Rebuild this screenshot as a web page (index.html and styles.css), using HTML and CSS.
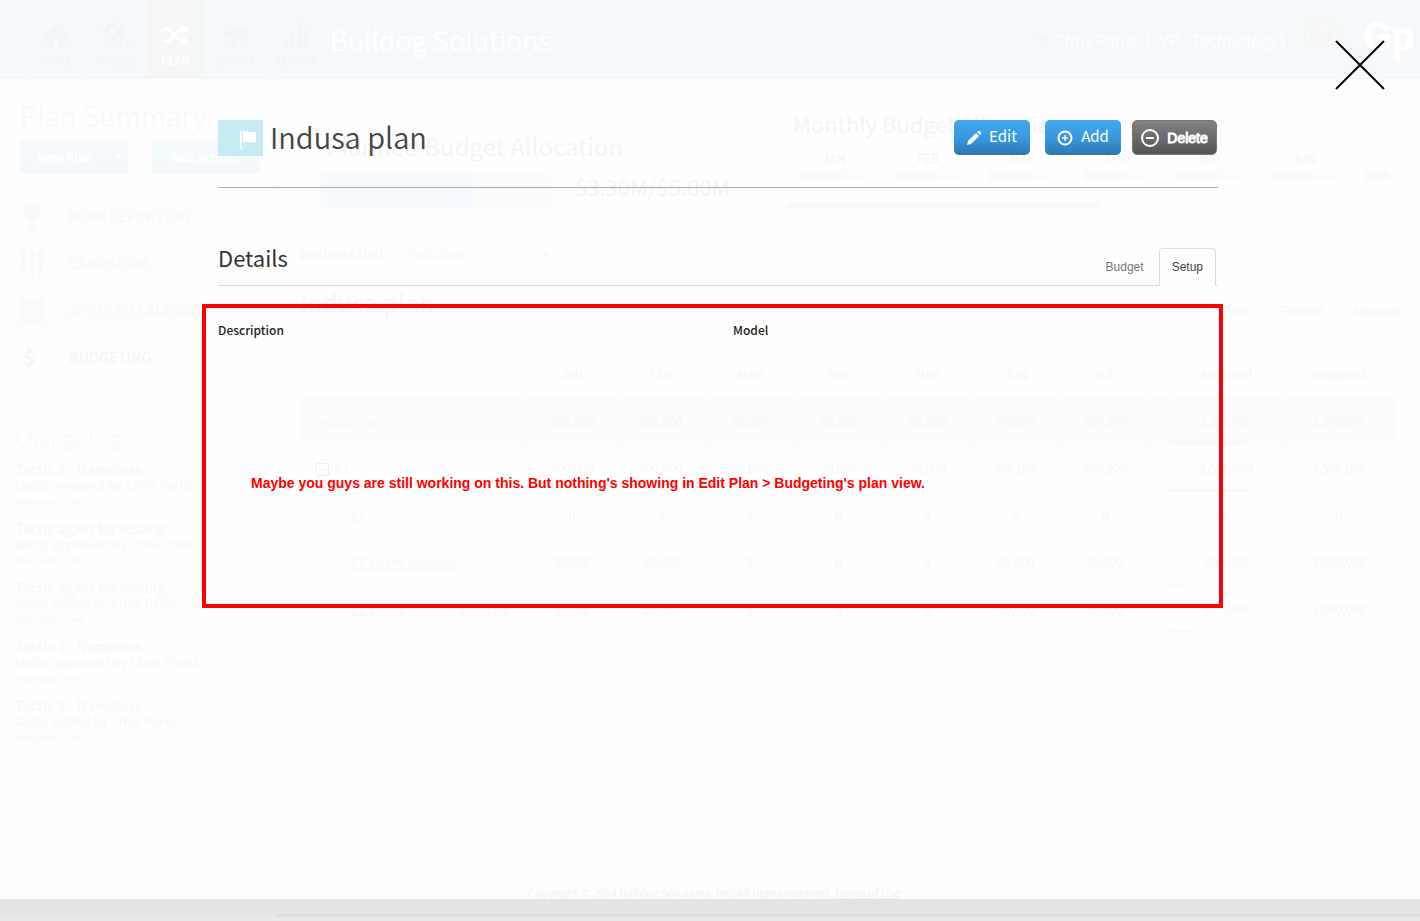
FILE: index.html
```html
<!DOCTYPE html>
<html lang="en">
<head>
<meta charset="utf-8">
<title>Indusa plan - Budgeting</title>
<link rel="stylesheet" href="styles.css">
</head>
<body>
<div class="page">
  <header class="topbar">
    <nav class="mainnav">
      <a href="#"><svg viewBox="0 0 28 28" width="28" height="28"><path d="M14 2 1 15h4v11h7v-8h4v8h7V15h4l-5-5V4h-3v3z"/></svg><span>HOME</span></a>
      <a href="#"><svg viewBox="0 0 28 28" width="28" height="28"><circle cx="11" cy="11" r="6" fill="none" stroke="currentColor" stroke-width="4"/><circle cx="11" cy="11" r="9" fill="none" stroke="currentColor" stroke-width="3" stroke-dasharray="4 3"/><circle cx="22" cy="22" r="4" fill="none" stroke="currentColor" stroke-width="3"/></svg><span>MODEL</span></a>
      <a href="#" class="active"><svg viewBox="0 0 28 28" width="28" height="28"><path d="M1 8h4c8 0 8 12 16 12M1 20h4c8 0 8-12 16-12" fill="none" stroke="currentColor" stroke-width="3"/><path d="M20 3l7 5-7 5zM20 15l7 5-7 5z"/></svg><span>PLAN</span></a>
      <a href="#"><svg viewBox="0 0 28 28" width="28" height="28"><path d="M2 10h8c6 0 11-3 15-7v20c-4-4-8-6-13-6l3 7h-5l-3-7H2z"/></svg><span>BOOST</span></a>
      <a href="#"><svg viewBox="0 0 28 28" width="28" height="28"><path d="M0 25h28v2H0zM2 20h4v5H2zM8 14h4v11H8zM15 1h5v24h-5zM22 9h4v16h-4z"/></svg><span>REPORT</span></a>
    </nav>
    <h1 class="brand">Bulldog Solutions</h1>
    <div class="user">
      <svg class="caret" viewBox="0 0 10 6" width="10" height="6"><path d="M0 0h3l2 2 2-2h3L5 6z"/></svg>
      <span>Chris Parisi</span><span>|</span><span>VP - Technology1</span>
    </div>
    <svg class="avatar" viewBox="0 0 36 28" width="36" height="28"><rect width="36" height="28" fill="#f5f6f6"/><path d="M4 24C2 10 10 1 17 4c8 4 3 13-2 12-5 0-5-7 0-8M20 4c10-2 15 5 12 10 0 6-8 12-15 10" fill="none" stroke="#f9f9f8" stroke-width="3"/></svg>
    <div class="logo">Gp</div>
  </header>

  <div class="columns">
    <aside class="sidebar">
      <h2>Plan Summary</h2>
      <div class="side-actions">
        <button type="button" class="split">New Plan <svg viewBox="0 0 8 4" width="8" height="4"><path d="M0 0h8L4 4z"/></svg></button>
        <button type="button">Add Activity</button>
      </div>
      <nav class="sidenav">
        <a href="#"><svg viewBox="0 0 24 26" width="24" height="26"><path d="M12 0a9 9 0 0 1 9 9c0 5-4 6-5 11H8C7 15 3 14 3 9a9 9 0 0 1 9-9zM8 21h8v3l-2 2h-4l-2-2z"/></svg>PLAN DEFINITION</a>
        <a href="#"><svg viewBox="0 0 24 26" width="24" height="26"><path d="M2 0h3v13h2v6H5v7H2v-7H0v-6h2zM11 0h3v8h2v6h-2v12h-3V14H9V8h2zM19 0h3v3h2v6h-2v17h-3V9h-2V3h2z"/></svg>CAMPAIGNS</a>
        <a href="#"><svg viewBox="0 0 24 26" width="24" height="26"><path d="M0 2h3V0h3v2h12V0h3v2h3v24H0z"/><path d="M2 9h20M2 14h20M2 19h20M7 11v12M12 11v12M17 11v12" stroke="#fdfdfd" fill="none"/></svg>APPLY TO CALENDAR</a>
        <a href="#" class="active"><span class="dollar">$</span>BUDGETING</a>
      </nav>
      <section class="log">
        <h3>Change Log</h3>
        <article><strong>Tactic 1 - Nameless</strong><p>tactic removed by Chris Parisi.</p><small>Today at 01:33 AM</small></article>
        <article><strong>Tactic again for testing</strong><p>tactic approved by Chris Parisi.</p><small>Today at 01:31 AM</small></article>
        <article><strong>Tactic again for testing</strong><p>tactic added by Chris Parisi.</p><small>Today at 01:31 AM</small></article>
        <article><strong>Tactic 1 - Nameless</strong><p>tactic approved by Chris Parisi.</p><small>Today at 01:29 AM</small></article>
        <article><strong>Tactic 1 - Nameless</strong><p>tactic added by Chris Parisi.</p><small>Today at 01:28 AM</small></article>
      </section>
    </aside>

    <main class="main">
      <div class="cards">
        <section class="card planned">
          <h2>Planned Budget Allocation</h2>
          <div class="planned-row"><div class="bar"><i></i></div><span>$3.30M/$5.00M</span></div>
        </section>
        <section class="card monthly">
          <h2>Monthly Budget Allocation</h2>
          <div class="months">
            <div class="month">JAN<div class="bar"><i></i></div></div>
            <div class="month">FEB<div class="bar"><i></i></div></div>
            <div class="month">MAR<div class="bar"><i></i></div></div>
            <div class="month">APR<div class="bar"><i></i></div></div>
            <div class="month">MAY<div class="bar"><i></i></div></div>
            <div class="month">JUN<div class="bar"><i></i></div></div>
            <div class="month">JUL<div class="bar"><i></i></div></div>
          </div>
          <div class="scrollbar"></div>
        </section>
      </div>
      <div class="unit">
        <label for="unit">Business Unit:</label>
        <div class="select"><select id="unit"><option>Individual</option></select><svg viewBox="0 0 8 4" width="8" height="4"><path d="M0 0h8L4 4z"/></svg></div>
      </div>
      <div class="plan-head">
        <h2>Indusa plan</h2>
        <nav><a href="#">Actuals</a><a href="#">Planned</a><a href="#" class="active">Allocated</a></nav>
      </div>
      <table class="budget">
        <colgroup><col class="c-name"><col><col><col><col><col><col><col><col class="c-gap"><col class="c-sum"><col class="c-sum"></colgroup>
        <thead><tr><th></th><th>JAN</th><th>FEB</th><th>MAR</th><th>APR</th><th>MAY</th><th>JUN</th><th>JUL</th><th></th><th>Allocated</th><th>Budgeted</th></tr></thead>
        <tbody>
          <tr class="total"><td><a href="#">Indusa plan</a></td><td>500,000</td><td>500,000</td><td>50,000</td><td>50,000</td><td>50,000</td><td>500,000</td><td>500,000</td><td></td><td>3,300,000<i class="meter" style="width:66%"></i></td><td>5,000,000</td></tr>
          <tr><td><button type="button" class="toggle" aria-label="Collapse C1"></button><a href="#">C1</a></td><td>300,000</td><td>300,000</td><td>30,000</td><td>30,000</td><td>30,000</td><td>300,000</td><td>400,000</td><td></td><td>2,515,000<i class="meter" style="width:72%"></i></td><td>3,500,000</td></tr>
          <tr class="child"><td><a href="#">P1</a></td><td>0</td><td>0</td><td>0</td><td>0</td><td>0</td><td>0</td><td>0</td><td></td><td>0</td><td>0</td></tr>
          <tr class="child"><td><a href="#">C1's baby program</a></td><td>50,000</td><td>50,000</td><td>0</td><td>0</td><td>0</td><td>50,000</td><td>50,000</td><td></td><td>200,000<i class="meter" style="width:10%"></i></td><td>2,000,000</td></tr>
          <tr class="child"><td><a href="#">C1's baby program duplicate</a></td><td>50,000</td><td>50,000</td><td>0</td><td>0</td><td>0</td><td>50,000</td><td>50,000</td><td></td><td>200,000<i class="meter" style="width:20%"></i></td><td>1,000,000</td></tr>
        </tbody>
      </table>
      <div class="table-scroll"><span class="first"></span><span class="second"></span></div>
    </main>
  </div>
  <footer class="footer">Copyright © 2014 Bulldog Solutions, Inc. All rights reserved. <a href="#">Terms of Use</a></footer>
  <div class="edge"><div class="edge-shadow"></div></div>
</div>

<div class="overlay" role="dialog" aria-label="Indusa plan">
  <button type="button" class="close" aria-label="Close"><svg viewBox="0 0 50 50" width="50" height="50"><path d="M1 1l48 48M49 1 1 49" stroke="#000" stroke-width="2" fill="none"/></svg></button>
  <div class="dialog">
    <div class="dialog-head">
      <span class="flag"><svg viewBox="0 0 16 19" width="16" height="19"><path d="M0 1h2v18H0zM3 2c4-3 6 2 13 0v10c-6 2-9-2-13 0z"/></svg></span>
      <h1>Indusa plan</h1>
      <div class="actions">
        <button type="button" class="btn"><svg viewBox="0 0 14 14" width="14" height="14"><path d="M0 14l1-4 8-8 3 3-8 8zM10 1l1-1h2l1 1v2l-1 1z"/></svg><span>Edit</span></button>
        <button type="button" class="btn"><svg viewBox="0 0 16 16" width="16" height="16"><g fill="none" stroke="#fff"><circle cx="8" cy="8" r="6.5" stroke-width="2"/><path d="M8 5v6M5 8h6" stroke-width="1.5"/></g></svg><span>Add</span></button>
        <button type="button" class="btn delete"><svg viewBox="0 0 18 18" width="18" height="18"><g fill="none" stroke="#fff" stroke-width="2"><circle cx="9" cy="9" r="8"/><path d="M5 9h8"/></g></svg>Delete</button>
      </div>
    </div>
    <div class="details-head">
      <h2>Details</h2>
      <nav class="tabs"><a href="#">Budget</a><a href="#" class="active">Setup</a></nav>
    </div>
    <div class="fields">
      <h3>Description</h3>
      <h3>Model</h3>
    </div>
    <div class="note"><p>Maybe you guys are still working on this. But nothing's showing in Edit Plan &gt; Budgeting's plan view.</p></div>
  </div>
</div>
</body>
</html>
```
FILE: styles.css
```css
* { box-sizing: border-box; }
body, h1, h2, h3, p { margin: 0; }
body {
  position: relative;
  background: #fefefe;
  color: #f4f4f4;
  font-family: "Noto Sans CJK SC", "Noto Sans", sans-serif;
  font-size: 12px;
  line-height: 16px;
}
h1, h2, h3 { font-weight: 400; }
a { color: inherit; text-decoration: none; }
button, select { font: inherit; color: inherit; border: 0; background: none; padding: 0; }
svg { display: block; fill: currentColor; flex: none; }

.page { min-height: 100vh; display: flex; flex-direction: column; overflow: hidden; }

/* Top bar */
.topbar { display: flex; align-items: center; height: 79px; padding: 0 5px 0 25px; background: #f5f9fc; border-bottom: 1px solid #f0f5f8; }
.mainnav { display: flex; align-self: stretch; }
.mainnav a { display: flex; flex-direction: column; align-items: center; gap: 4px; width: 60px; padding-top: 21px; border-left: 1px solid #f8fbfd; color: #f2f5f7; font-size: 11px; line-height: 14px; font-weight: 700; }
.mainnav .active { background: #f5f6f8; color: #fff; }
.brand { margin-left: 5px; padding-top: 2px; color: #fff; font-size: 27px; line-height: 36px; font-weight: 350; }
.user { display: flex; align-items: center; gap: 9px; margin-left: auto; padding-top: 2px; color: #fff; font-size: 16px; line-height: 24px; }
.caret { color: #f0f4f7; }
.avatar { margin: 0 24px 8px 16px; }
.logo { padding-bottom: 4px; color: #fff; font: 900 42px/50px Roboto, sans-serif; }

.columns { flex: 1; display: flex; }

/* Sidebar */
.sidebar { width: 280px; border-right: 8px solid #fdfdfd; }
.sidebar h2 { padding: 16px 0 0 20px; color: #f8f8f8; font-size: 28px; line-height: 40px; font-weight: 300; }
.side-actions { display: flex; gap: 24px; padding: 4px 0 0 20px; }
.side-actions button { display: flex; align-items: center; justify-content: center; width: 108px; height: 35px; border-radius: 4px; background: linear-gradient(#f5fafe, #f3f8fb); color: #fff; font-size: 12px; font-weight: 700; }
.side-actions .split { justify-content: space-between; padding: 0 5px 0 17px; }
.sidenav { margin-top: 18px; background: #fdfdfd; }
.sidenav a { display: flex; align-items: center; gap: 25px; height: 47px; padding-left: 20px; border-top: 1px solid #fcfcfc; color: #f9f9f8; font-size: 14px; font-weight: 700; white-space: nowrap; }
.sidenav .active { color: #f4f7f9; background: #fefefe; }
.dollar { width: 24px; font-size: 21px; line-height: 24px; padding-left: 3px; }
.log { padding: 46px 10px 0 15px; color: #f8f8f8; }
.log h3 { margin-bottom: 11px; border-bottom: 1px solid #fafafa; font-size: 20px; line-height: 24px; font-weight: 300; }
.log article { display: flex; flex-direction: column; height: 59px; font-size: 13px; line-height: 15px; }
.log strong { font-size: 14px; font-weight: 500; }
.log small { padding-top: 2px; font-size: 8px; }

/* Main area */
.main { flex: 1; min-width: 0; padding: 20px 24px 0 20px; }
.cards { display: grid; grid-template-columns: 473fr 625fr; gap: 3px; margin-right: -5px; }
.card { height: 121px; min-width: 0; border: 1px solid #fbfbfb; }
.card h2 { color: #f4f4f4; font-size: 24px; line-height: 32px; }
.planned { padding: 30px 10px 0 20px; }
.planned h2 { padding-left: 5px; }
.planned-row { display: flex; align-items: flex-start; gap: 24px; padding-top: 10px; font-size: 22px; line-height: 28px; }
.bar { background: #fcfcfc; }
.bar i { display: block; height: 100%; width: 60%; background: #f5fbff; }
.planned .bar { width: 230px; height: 37px; }
.planned .bar i { width: 66%; }
.monthly { padding: 7px 10px 0 10px; }
.monthly h2 { padding-left: 6px; font-size: 22px; }
.months { display: flex; gap: 28px; padding: 11px 0 0 14px; overflow: hidden; }
.month { flex: none; width: 66px; text-align: center; }
.month .bar { height: 10px; margin-top: 4px; }
.scrollbar { width: 313px; height: 6px; margin-top: 22px; border-radius: 3px; background: #f9f9f9; }
.unit { display: flex; align-items: center; gap: 10px; padding-top: 20px; color: #f7f7f7; font-size: 13px; font-weight: 500; }
.select { display: flex; align-items: center; width: 160px; height: 27px; padding: 0 8px; border: 1px solid #fafafa; border-radius: 4px; font-weight: 300; }
.select select { flex: 1; appearance: none; }
.plan-head { display: flex; justify-content: space-between; margin-right: -20px; padding-top: 19px; color: #f7f7f7; }
.plan-head h2 { font-size: 24px; line-height: 32px; font-weight: 500; }
.plan-head nav { display: flex; padding-top: 8px; font: 12px/16px "Liberation Sans", sans-serif; }
.plan-head nav a { padding: 9px 14px; }
.plan-head .active { border: 1px solid #fbfbfb; border-bottom: 0; }
.budget { width: 100%; margin-top: 21px; table-layout: fixed; border-collapse: collapse; color: #f6f6f6; }
.c-name { width: 227px; }
.c-gap { width: 20px; }
.c-sum { width: 113px; }
.budget th, .budget td { position: relative; height: 47px; padding: 0; border: 1px solid #fbfbfb; text-align: center; font-weight: 400; }
.budget td:first-child { padding-left: 15px; text-align: left; white-space: nowrap; overflow: hidden; }
.budget .child td:first-child { padding-left: 50px; }
.budget a { color: #f4f9fc; text-decoration: underline; }
.total { background: #fcfcfc; }
.toggle { display: inline-block; width: 13px; height: 13px; margin-right: 6px; padding: 0 2px; border: 1px solid #f0f0f0; vertical-align: middle; }
.toggle::before { content: ""; display: block; height: 1px; background: #f0f0f0; }
.meter { position: absolute; left: 0; bottom: 0; height: 2px; background: #f5faff; }
.table-scroll { display: flex; gap: 30px; padding: 4px; }
.table-scroll span { height: 8px; border-radius: 4px; background: #fcfcfc; }
.first { width: 196px; }
.second { width: 380px; }

/* Page foot */
.footer { height: 26px; padding: 11px 0 0 8px; background: #fdfdfd; color: #f3f3f3; text-align: center; font-size: 11px; line-height: 16px; }
.footer a { text-decoration: underline; }
.edge { height: 22px; padding: 15px 0 0 276px; background: linear-gradient(#e4e4e4 15px, #e8e8e8 15px); }
.edge-shadow { height: 4px; background: linear-gradient(#d9d9d9, #e5e5e5); }

/* Dialog */
.overlay { position: absolute; top: 0; left: 0; right: 0; color: #333; }
.close { position: absolute; top: 40px; right: 35px; }
.dialog { position: relative; max-width: 1000px; margin: 0 auto; left: 8px; padding-top: 120px; }
.dialog-head { display: flex; align-items: flex-start; height: 68px; border-bottom: 1px solid #aaa; }
.flag { display: flex; justify-content: flex-end; width: 45px; height: 36px; padding: 10px 7px 0 0; background: #c6ebf3; color: #fff; }
.dialog-head h1 { margin-left: 7px; color: #444; font-size: 29px; line-height: 32px; font-weight: 350; }
.actions { display: flex; margin-left: auto; padding-right: 1px; }
.btn { display: flex; align-items: center; justify-content: center; gap: 8px; width: 76px; height: 35px; margin-right: 15px; border-radius: 5px; background: linear-gradient(#3fa7f4, #3997dc 55%, #2d76ad); color: #fff; font-size: 15px; line-height: 20px; }
.btn span { padding-bottom: 3px; }
.btn + .btn { margin-right: 11px; }
.btn.delete { width: 85px; margin-right: 0; border: 1px solid #777; background: linear-gradient(#828282, #555); font: 14px/20px "Liberation Sans", sans-serif; -webkit-text-stroke: 1px #fff; }
.details-head { display: flex; justify-content: space-between; align-items: flex-end; height: 98px; border-bottom: 1px solid #ddd; }
.details-head h2 { font-size: 22px; line-height: 32px; padding-bottom: 12px; color: #333; }
.tabs { display: flex; padding-right: 2px; margin-bottom: -1px; font: 12px/16px "Liberation Sans", sans-serif; color: #777; }
.tabs a { padding: 10px 12px 11px; border: 1px solid transparent; border-bottom: 0; }
.tabs a:first-child { padding-right: 14px; }
.tabs .active { border-color: #ddd; border-radius: 4px 4px 0 0; background: #fefefe; color: #444; }
.fields { display: grid; grid-template-columns: 1fr 1fr; gap: 30px; padding-top: 36px; }
.fields h3 { font-size: 12px; line-height: 16px; font-weight: 500; color: #222; }
.note { position: absolute; top: 304px; left: -16px; right: -5px; height: 304px; padding: 167px 45px 0; border: 4px solid #f00; color: #f00; font: 700 14px/16px "Liberation Sans", sans-serif; }
```
